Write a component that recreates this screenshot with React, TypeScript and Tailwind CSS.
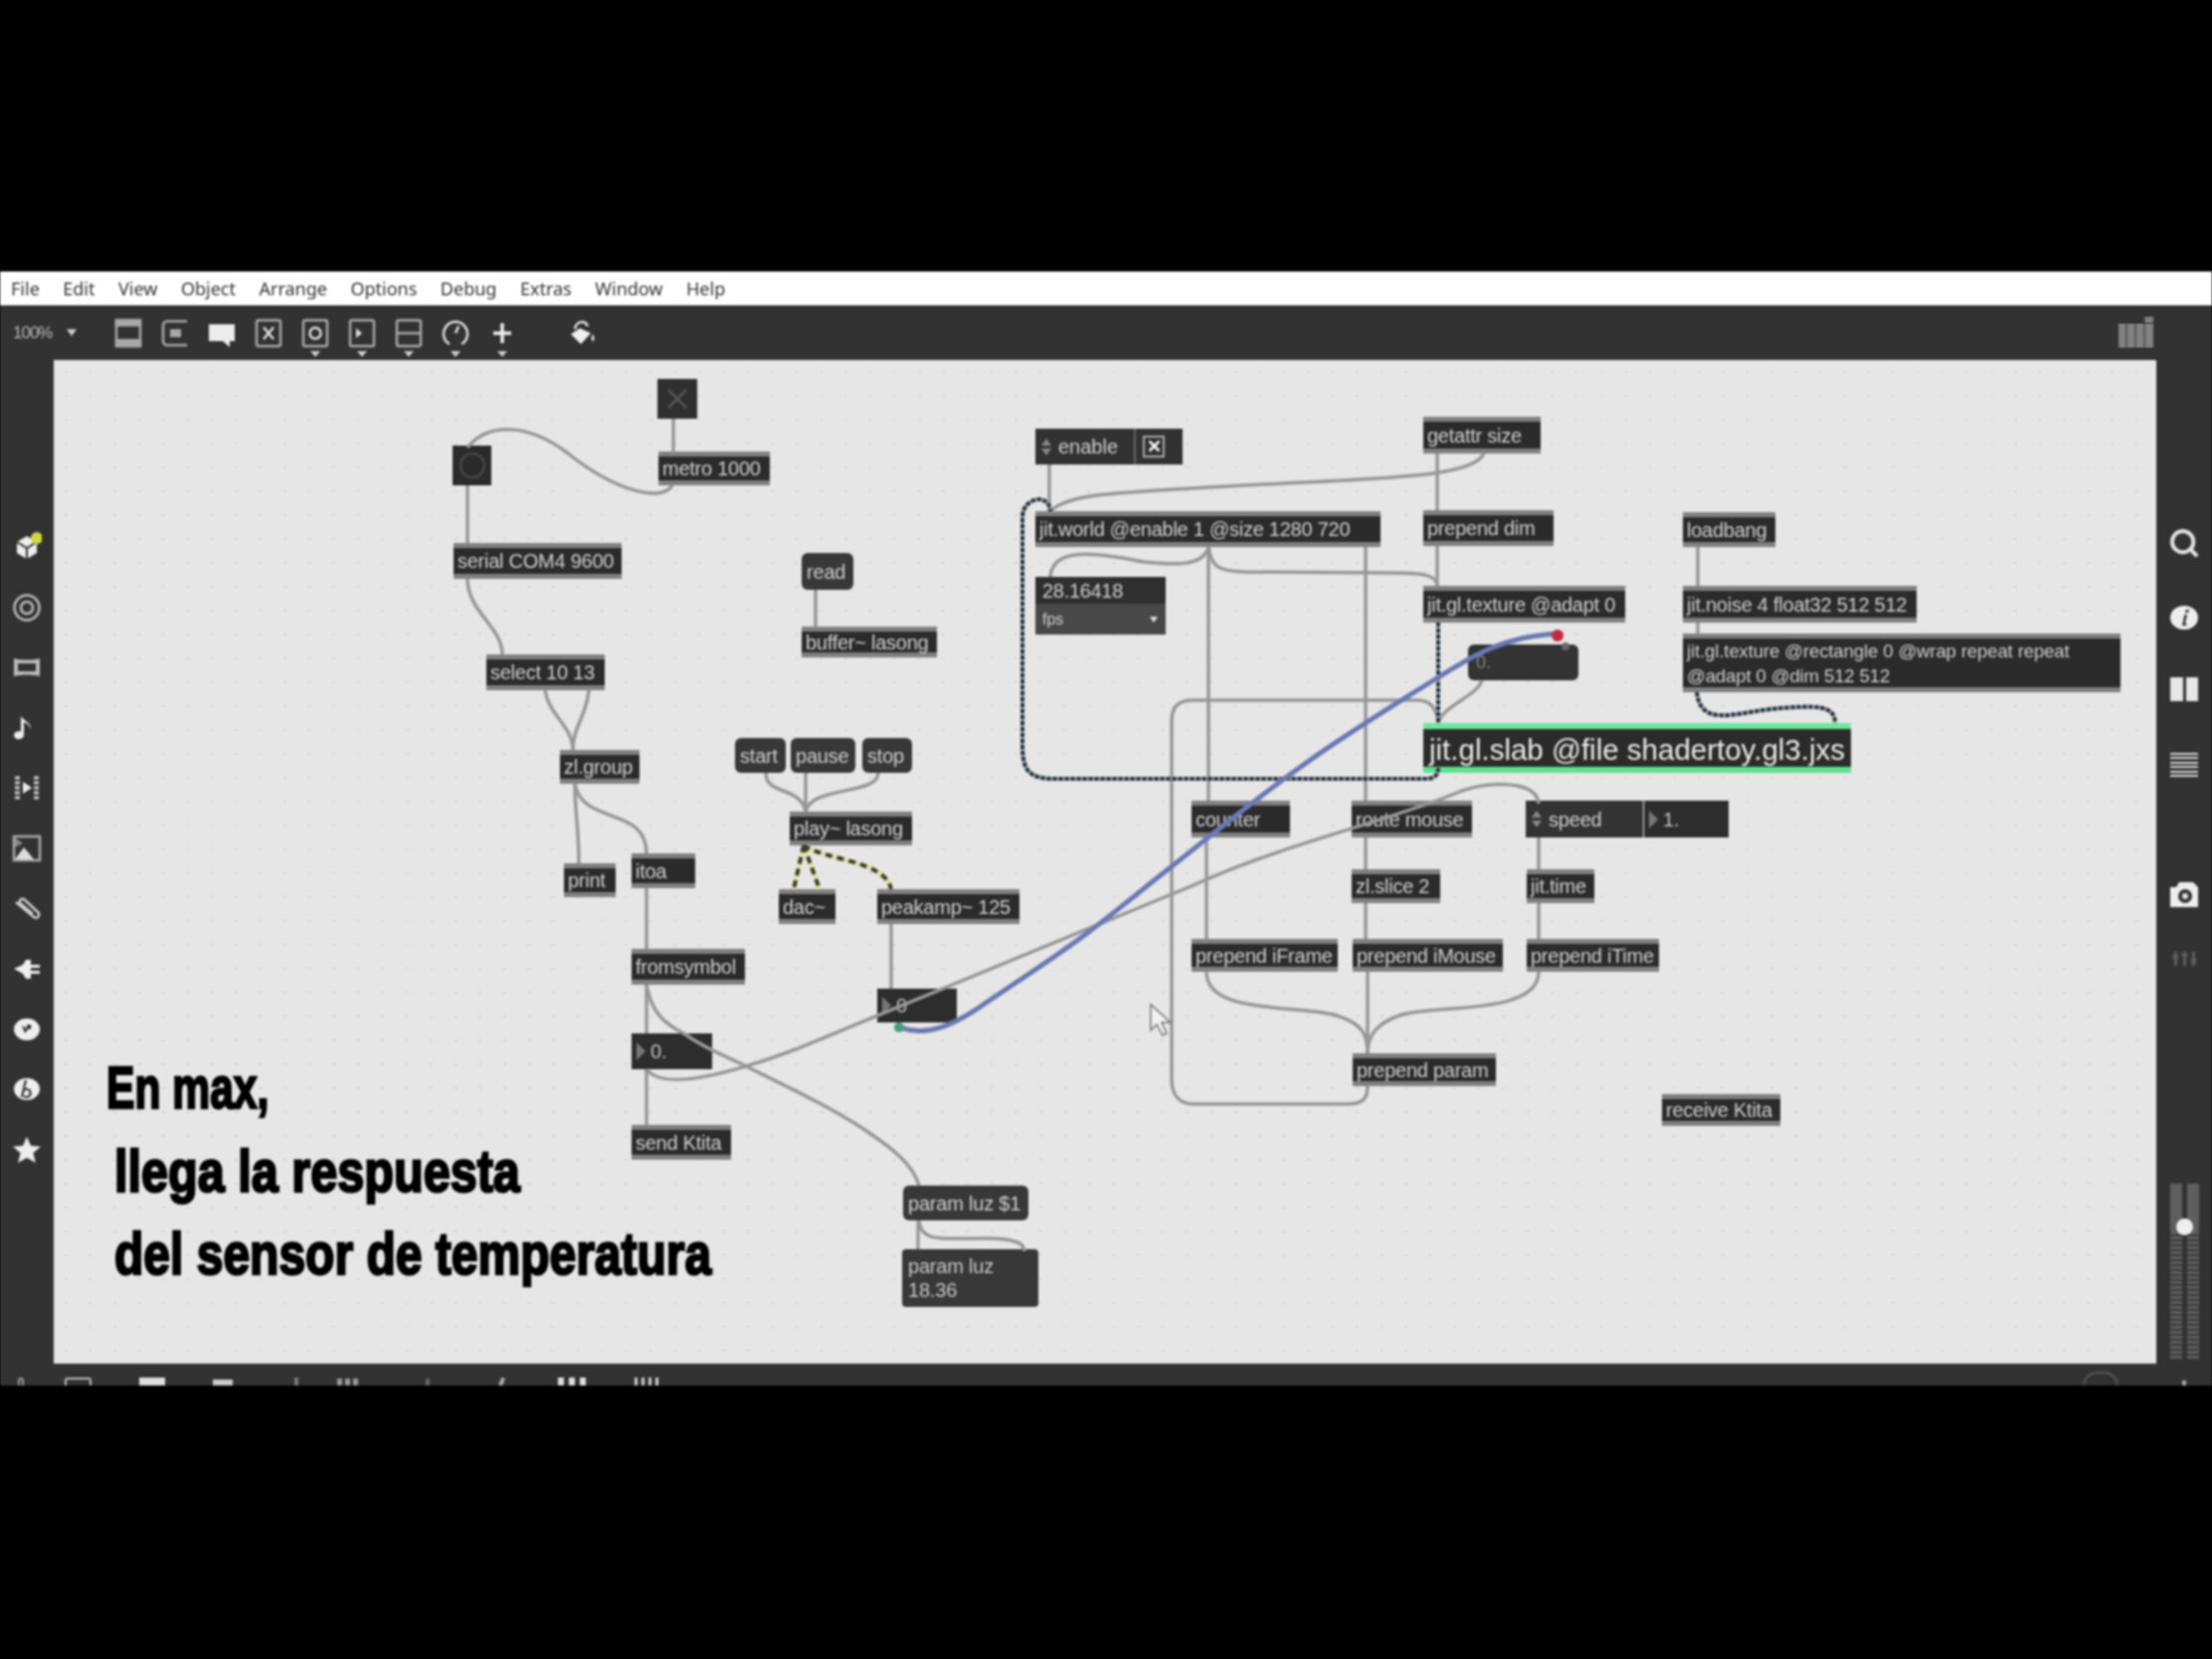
import { ReactNode } from "react";
import { Search } from "lucide-react";

// positions are in page pixels, the canvas starts at 54,362
const CX = 54;
const CY = 362;

type NodeData = {
  t: string;
  x: number;
  y: number;
  r: number;
  b: number;
  kind?: "obj" | "msg" | "num" | "attr";
};

const nodes: NodeData[] = [
  { t: "metro 1000", x: 662, y: 454, r: 774, b: 488 },
  { t: "serial COM4 9600", x: 456, y: 546, r: 625, b: 582 },
  { t: "select 10 13", x: 489, y: 658, r: 608, b: 694 },
  { t: "zl.group", x: 563, y: 754, r: 643, b: 788 },
  { t: "print", x: 567, y: 868, r: 619, b: 902 },
  { t: "itoa", x: 635, y: 858, r: 699, b: 893 },
  { t: "fromsymbol", x: 635, y: 954, r: 749, b: 990 },
  { t: "send Ktita", x: 635, y: 1131, r: 735, b: 1166 },
  { t: "buffer~ lasong", x: 806, y: 630, r: 942, b: 661 },
  { t: "play~ lasong", x: 794, y: 816, r: 917, b: 850 },
  { t: "dac~", x: 783, y: 894, r: 840, b: 929 },
  { t: "peakamp~ 125", x: 882, y: 894, r: 1025, b: 929 },
  { t: "getattr size", x: 1431, y: 419, r: 1549, b: 456 },
  { t: "jit.world @enable 1 @size 1280 720", x: 1041, y: 514, r: 1388, b: 550 },
  { t: "prepend dim", x: 1431, y: 513, r: 1562, b: 549 },
  { t: "loadbang", x: 1692, y: 515, r: 1785, b: 550 },
  { t: "jit.gl.texture @adapt 0", x: 1431, y: 589, r: 1634, b: 626 },
  { t: "jit.noise 4 float32 512 512", x: 1692, y: 589, r: 1927, b: 626 },
  { t: "counter", x: 1198, y: 805, r: 1297, b: 842 },
  { t: "route mouse", x: 1359, y: 805, r: 1480, b: 842 },
  { t: "zl.slice 2", x: 1359, y: 874, r: 1448, b: 908 },
  { t: "jit.time", x: 1535, y: 874, r: 1603, b: 908 },
  { t: "prepend iFrame", x: 1198, y: 944, r: 1345, b: 977 },
  { t: "prepend iMouse", x: 1360, y: 944, r: 1511, b: 977 },
  { t: "prepend iTime", x: 1535, y: 944, r: 1668, b: 977 },
  { t: "prepend param", x: 1360, y: 1059, r: 1504, b: 1092 },
  { t: "receive Ktita", x: 1671, y: 1100, r: 1790, b: 1132 },
  { t: "read", x: 806, y: 556, r: 858, b: 593, kind: "msg" },
  { t: "start", x: 739, y: 742, r: 790, b: 777, kind: "msg" },
  { t: "pause", x: 795, y: 742, r: 860, b: 777, kind: "msg" },
  { t: "stop", x: 867, y: 742, r: 917, b: 777, kind: "msg" },
  { t: "param luz $1", x: 908, y: 1192, r: 1034, b: 1227, kind: "msg" },
  { t: "0.", x: 635, y: 1039, r: 716, b: 1075, kind: "num" },
  { t: "0", x: 882, y: 994, r: 962, b: 1028, kind: "num" },
  { t: "1.", x: 1653, y: 805, r: 1738, b: 842, kind: "num" },
  { t: "speed", x: 1534, y: 805, r: 1652, b: 842, kind: "attr" },
];

const grayWires = [
  "M677 421L677 456",
  "M676 488C665 505 620 495 570 455C530 425 490 425 470 450",
  "M470 488L470 546",
  "M470 582C470 615 505 630 505 658",
  "M548 694C552 720 576 730 576 754",
  "M592 694C590 720 576 730 576 754",
  "M578 788C578 820 582 830 582 868",
  "M578 788C585 830 650 810 650 858",
  "M650 893L650 954",
  "M650 990L650 1039",
  "M650 990C655 1020 670 1030 689 1040C710 1055 730 1062 750 1072C790 1092 835 1113 868 1135C895 1153 918 1170 924 1192",
  "M650 1075L650 1131",
  "M650 1075C665 1095 720 1085 800 1055L1200 890C1300 845 1400 825 1470 795C1500 785 1545 785 1547 808",
  "M770 777C770 800 805 790 810 816",
  "M810 777L810 816",
  "M883 777C883 800 815 790 810 816",
  "M820 593L820 630",
  "M896 929L896 994",
  "M1055 467L1055 514",
  "M1492 456C1480 480 1400 480 1250 488C1130 495 1075 495 1056 514",
  "M1445 456L1445 513",
  "M1445 549L1445 589",
  "M1215 550C1210 570 1180 568 1150 565C1100 555 1058 550 1056 580",
  "M1215 550C1218 570 1225 574 1250 575L1400 576C1430 576 1445 578 1445 589",
  "M1215 550L1215 805",
  "M1213 842L1213 944",
  "M1373 550L1373 805",
  "M1373 842L1373 874",
  "M1373 908L1373 944",
  "M1490 684C1485 700 1450 710 1446 727",
  "M1375 1092C1375 1105 1370 1110 1355 1110L1200 1110C1185 1110 1178 1100 1178 1085L1178 725C1178 710 1185 704 1200 704L1425 704C1440 704 1445 715 1446 727",
  "M1707 550L1707 589",
  "M1707 626L1707 637",
  "M1547 842L1547 874",
  "M1547 908L1547 944",
  "M1213 977C1213 1020 1300 1010 1340 1020C1370 1028 1375 1040 1375 1059",
  "M1375 977L1375 1059",
  "M1547 977C1547 1020 1450 1010 1410 1020C1385 1028 1375 1040 1375 1059",
  "M923 1227L923 1256",
  "M924 1227C925 1250 950 1245 990 1245C1020 1245 1030 1250 1030 1258",
];

const dashWires = [
  "M1446 626L1446 727",
  "M1446 772C1446 782 1440 783 1430 783L1060 783C1035 783 1028 775 1028 750L1028 520C1028 500 1055 495 1056 514",
  "M1706 696C1710 730 1740 718 1780 713C1830 708 1845 710 1845 727",
];

const menu = ["File", "Edit", "View", "Object", "Arrange", "Options", "Debug", "Extras", "Window", "Help"];

function Obj({ n }: { n: NodeData }) {
  const kind = n.kind ?? "obj";
  const pos = { left: n.x - CX, top: n.y - CY, width: n.r - n.x, height: n.b - n.y };
  if (kind === "msg") {
    return (
      <div style={pos} className="absolute flex items-center whitespace-nowrap rounded-[6px] bg-[#383838] px-[5px] text-[20px] leading-none tracking-[-0.2px] text-[#d0d0d0]">
        {n.t}
      </div>
    );
  }
  if (kind === "num") {
    return (
      <div style={pos} className="absolute flex items-center gap-[5px] bg-[#2d2d2d] pl-[5px] text-[20px] leading-none text-[#c0c0c0]">
        <span className="h-0 w-0 border-y-[9px] border-l-[9px] border-y-transparent border-l-[#777]" />
        {n.t}
      </div>
    );
  }
  if (kind === "attr") {
    return (
      <div style={pos} className="absolute flex items-center gap-[7px] bg-[#333] pl-[6px] text-[20px] leading-none tracking-[-0.2px] text-[#d0d0d0]">
        <Updown />
        {n.t}
      </div>
    );
  }
  return (
    <div style={pos} className="absolute flex items-center whitespace-nowrap border-y-[5px] border-[#808080] bg-[#2b2b2b] px-[4px] text-[20px] leading-none tracking-[-0.25px] text-[#d0d0d0]">
      {n.t}
    </div>
  );
}

function Updown() {
  return (
    <span className="flex flex-col gap-[3px]">
      <span className="h-0 w-0 border-x-[5px] border-b-[7px] border-x-transparent border-b-[#888]" />
      <span className="h-0 w-0 border-x-[5px] border-t-[7px] border-x-transparent border-t-[#888]" />
    </span>
  );
}

function Tool({ children, caret }: { children: ReactNode; caret?: boolean }) {
  return (
    <div className="relative h-[30px] w-[28px]">
      <svg viewBox="0 0 28 30" className="h-[30px] w-[28px] text-[#a8a8a8]" fill="none" stroke="currentColor" strokeWidth="2.5">
        {children}
      </svg>
      {caret && (
        <span className="absolute left-[9px] top-[33px] h-0 w-0 border-x-[5px] border-t-[6px] border-x-transparent border-t-[#ccc]" />
      )}
    </div>
  );
}

function Toolbar() {
  return (
    <div className="flex h-[55px] items-center bg-[#323232]">
      <span className="ml-[13px] w-[44px] text-[17px] tracking-[-1px] text-[#b8b8b8]">100%</span>
      <span className="ml-[10px] h-0 w-0 border-x-[5px] border-t-[7px] border-x-transparent border-t-[#ccc]" />
      <div className="ml-[38px] flex items-center gap-[19px]">
        <Tool>
          <rect x="2" y="2" width="24" height="26" />
          <rect x="2" y="2" width="24" height="5" fill="currentColor" />
          <rect x="2" y="22" width="24" height="6" fill="currentColor" />
        </Tool>
        <Tool>
          <path d="M26 3H6a4 4 0 0 0-4 4v16a4 4 0 0 0 4 4h20" />
          <rect x="9" y="11" width="11" height="8" fill="currentColor" stroke="none" />
        </Tool>
        <Tool>
          <path d="M1 6h26v17h-5v6l-7-6H1z" fill="#ececec" stroke="none" />
        </Tool>
        <Tool>
          <rect x="2" y="2" width="24" height="26" rx="2" />
          <path d="M9 9l10 12M19 9L9 21" stroke="#ddd" />
        </Tool>
        <Tool caret>
          <rect x="2" y="2" width="24" height="26" rx="2" />
          <circle cx="14" cy="15" r="5.5" stroke="#ddd" />
        </Tool>
        <Tool caret>
          <rect x="2" y="2" width="24" height="26" rx="2" />
          <path d="M8 10l6 5-6 5z" fill="#ddd" stroke="none" />
        </Tool>
        <Tool caret>
          <rect x="2" y="2" width="24" height="26" rx="2" />
          <path d="M2 15h24" />
        </Tool>
        <Tool caret>
          <path d="M8 26a12 12 0 1 1 12 0" stroke="#ddd" />
          <path d="M14 15l3-7" stroke="#ddd" />
        </Tool>
        <Tool caret>
          <path d="M14 5v20M5 15h18" stroke="#eee" strokeWidth="3.500" />
        </Tool>
      </div>
      <div className="ml-[52px]">
        <Tool>
          <path d="M12 10L3 16l10 10 10-11z" fill="#f0f0f0" stroke="none" />
          <path d="M7 11C8 3 17 1 20 8" stroke="#e0e0e0" strokeWidth="2.500" />
          <path d="M25 16c2 3 2 6 0 7-2-1-2-4 0-7z" fill="#ddd" stroke="none" />
        </Tool>
      </div>
      <svg viewBox="0 0 35 33" className="ml-auto mr-[59px] h-[33px] w-[35px]">
        <path d="M0 9h35M0 12h35M0 15h35M0 18h35M0 21h35M0 24h35M0 27h35M0 30h35M26 2h9M26 5h9" stroke="#a8a8a8" strokeWidth="2" />
        <path d="M8 8v25M17 8v25M26 1v32" stroke="#323232" strokeWidth="1" />
      </svg>
    </div>
  );
}

const leftIcons: ReactNode[] = [
  <>
    <path d="M5 10l10-6 10 6v11l-10 6-10-6z" fill="#eee" />
    <path d="M5 10l10 6 10-6M15 16v11" stroke="#333" strokeWidth="2" fill="none" />
    <circle cx="25" cy="6" r="6" fill="#d3d83a" />
  </>,
  <>
    <circle cx="15" cy="15" r="12.5" fill="none" stroke="#bbb" strokeWidth="2.5" />
    <circle cx="15" cy="15" r="6" fill="none" stroke="#bbb" strokeWidth="2.5" />
  </>,
  <path d="M2 6c8 2 18 2 26 0v18c-8-2-18-2-26 0zM6 11v8h18v-8z" fill="#bbb" fillRule="evenodd" />,
  <path d="M12 5v17a5 4 0 1 1-3-3.500V3c3 5 10 6 10 13-2-5-5-6-7-7z" fill="#eee" />,
  <>
    <path d="M3 5h5M3 10h5M3 15h5M3 20h5M3 25h5M22 5h5M22 10h5M22 15h5M22 20h5M22 25h5" stroke="#ccc" strokeWidth="3" />
    <path d="M11 9l9 6-9 6z" fill="#eee" />
  </>,
  <>
    <rect x="2" y="3" width="26" height="24" fill="none" stroke="#aaa" strokeWidth="2.5" />
    <path d="M3 26l9-12 6 7 4 5z" fill="#ddd" />
    <path d="M3 4l8 6-8 4z" fill="#888" />
  </>,
  <path d="M4 8l18 15a3 3 0 0 0 4-5L12 5a3 3 0 0 0-4 4l13 11" fill="none" stroke="#ccc" strokeWidth="2.5" />,
  <path d="M2 15l9-4 3-5h5v5h9v3h-9v3h9v3h-9v5h-5l-3-5z" fill="#eee" />,
  <>
    <ellipse cx="15" cy="15" rx="13" ry="11" fill="#eee" />
    <path d="M10 11l3 8 3-4zM17 10a2.500 2.500 0 1 0 .1 0z" fill="#333" />
  </>,
  <>
    <ellipse cx="15" cy="15" rx="13" ry="11" fill="#eee" />
    <path d="M14 6l-4 17M12 16a4 4 0 1 1 0 6" fill="none" stroke="#333" strokeWidth="2.2" />
  </>,
  <path d="M15 2l4 9 10 .8-7.600 6.400 2.400 9.800L15 23l-8.800 5 2.400-9.800L1 11.800 11 11z" fill="#eee" />,
];

function LeftBar() {
  return (
    <div className="flex w-[54px] shrink-0 flex-col items-center gap-[30.600px] bg-[#323232] pt-[173px]">
      {leftIcons.map((icon, i) => (
        <svg key={i} viewBox="0 0 30 30" className="h-[30px] w-[30px]">
          {icon}
        </svg>
      ))}
    </div>
  );
}

function RightBar() {
  return (
    <div className="flex w-[56px] shrink-0 flex-col items-center bg-[#323232] pt-[168px] text-[#ddd]">
      <Search size={32} strokeWidth={3} className="text-[#e2e2e2]" />
      <svg viewBox="0 0 30 24" className="mt-[47px] h-[24px] w-[30px]">
        <ellipse cx="15" cy="12" rx="14" ry="12" fill="#eee" />
        <path d="M17 4h3l-1 3h-3zM15 9h3l-2 9 2 .5-1 1.500h-4l2-9z" fill="#333" />
      </svg>
      <div className="mt-[48px] flex h-[24px] w-[28px] gap-[3px]">
        <div className="flex-1 bg-[#e6e6e6]" />
        <div className="flex-1 bg-[#e6e6e6]" />
      </div>
      <div className="mt-[52px] flex h-[24px] w-[28px] flex-col justify-between">
        {[0, 1, 2, 3, 4, 5].map((i) => (
          <div key={i} className="h-[2px] bg-[#d8d8d8]" />
        ))}
      </div>
      <svg viewBox="0 0 30 26" className="mt-[105px] h-[26px] w-[30px]">
        <path d="M1 6h6l3-5h14l5 5v20H1z" fill="#eee" />
        <circle cx="16" cy="15" r="7" fill="#333" />
        <circle cx="16" cy="15" r="3" fill="#ddd" />
      </svg>
      <svg viewBox="0 0 24 14" className="mt-[45px] h-[14px] w-[26px]" fill="#5c5c5c">
        <rect x="2" y="0" width="3" height="14" />
        <rect x="11" y="0" width="3" height="14" />
        <rect x="20" y="0" width="3" height="14" />
        <circle cx="3.500" cy="5" r="3" />
        <circle cx="12.500" cy="3" r="3" />
        <circle cx="21.500" cy="9" r="3" />
      </svg>
      <div className="relative mt-[219px] flex h-[177px] w-[29px] justify-between">
        {[0, 1].map((i) => (
          <div key={i} className="flex w-[12px] flex-col">
            <div className="h-[48px] bg-[#5e5e5e]" />
            <div className="flex-1 bg-[repeating-linear-gradient(#5c5c5c_0,#5c5c5c_3px,#3c3c3c_3px,#3c3c3c_5px)]" />
          </div>
        ))}
        <div className="absolute left-[6px] top-[35px] h-[17px] w-[17px] rounded-full bg-[#eee]" />
      </div>
    </div>
  );
}

function Wires() {
  return (
    <svg viewBox="54 362 2114 1009" className="pointer-events-none absolute inset-0 h-full w-full" fill="none">
      {grayWires.map((d, i) => (
        <path key={i} d={d} stroke="#979797" strokeWidth="3.500" />
      ))}
      {dashWires.map((d, i) => (
        <g key={i}>
          <path d={d} stroke="#9aa4ad" strokeWidth="4" />
          <path d={d} stroke="#24303c" strokeWidth="4" strokeDasharray="4 2" />
        </g>
      ))}
      <path d="M808 850L798 894M808 850L824 894M808 850C830 865 890 865 896 894" stroke="#e0e2a8" strokeWidth="5" />
      <path d="M808 850L798 894M808 850L824 894M808 850C830 865 890 865 896 894" stroke="#3b3b2c" strokeWidth="4" strokeDasharray="7 5" />
      <path d="M905 1033C935 1044 965 1027 993 1007C1030 982 1060 963 1092 939C1120 918 1150 893 1177 872C1220 838 1260 805 1305 773C1350 740 1400 710 1446 681C1480 660 1510 640 1566 637" stroke="#6a79b4" strokeWidth="5" />
      <circle cx="904" cy="1033" r="5" fill="#4d9a7c" />
      <circle cx="1566" cy="639" r="6" fill="#c22a45" />
      <circle cx="1574" cy="650" r="4" fill="#666" />
      {/* mouse pointer */}
      <path d="M1157 1010L1157 1036L1163 1030L1169 1041L1173 1039L1168 1028L1177 1028Z" fill="#f2f2f2" stroke="#777" strokeWidth="1.500" />
    </svg>
  );
}

function Canvas() {
  return (
    <div className="relative flex-1 overflow-hidden bg-[#e6e6e6] bg-[radial-gradient(#d2d2d2_1px,transparent_1.500px)] bg-[size:24.500px_24px] font-['Liberation_Sans',Arial,sans-serif]">
      {/* toggle */}
      <div className="absolute left-[607px] top-[19px] flex h-[40px] w-[40px] items-center justify-center bg-[#2f2f2f]">
        <svg viewBox="0 0 24 24" className="h-[24px] w-[24px]" stroke="#555" strokeWidth="2.500">
          <path d="M3 3l18 18M21 3L3 21" />
        </svg>
      </div>
      {/* button */}
      <div className="absolute left-[401px] top-[86px] flex h-[40px] w-[39px] items-center justify-center bg-[#2b2b2b]">
        <div className="h-[26px] w-[26px] rounded-full border-[2px] border-[#4c4c4c]" />
      </div>
      {nodes.map((n) => (
        <Obj key={n.t + n.x} n={n} />
      ))}
      {/* enable attrui */}
      <div className="absolute left-[987px] top-[69px] flex h-[36px] w-[148px] items-center bg-[#323232] pl-[6px] text-[20px] leading-none text-[#d0d0d0]">
        <Updown />
        <span className="ml-[7px] w-[76px]">enable</span>
        <span className="flex h-full items-center border-l-[2px] border-[#666] pl-[7px]">
          <span className="flex h-[22px] w-[22px] items-center justify-center border-[2px] border-[#aaa] text-[18px] font-bold text-white">✕</span>
        </span>
      </div>
      {/* fpsgui */}
      <div className="absolute left-[987px] top-[218px] flex h-[58px] w-[131px] flex-col bg-[#2f2f2f] text-[#d0d0d0]">
        <div className="flex h-[27px] items-center pl-[7px] text-[20px] leading-none tracking-[-0.3px]">28.16418</div>
        <div className="flex flex-1 items-center justify-between bg-[#484848] pl-[7px] pr-[8px] text-[16px] leading-none">
          fps
          <span className="h-0 w-0 border-x-[4px] border-t-[6px] border-x-transparent border-t-[#ddd]" />
        </div>
      </div>
      {/* long texture box */}
      <div className="absolute left-[1638px] top-[275px] flex h-[59px] w-[440px] items-center border-y-[5px] border-[#808080] bg-[#2b2b2b] px-[4px] text-[18.500px] leading-[25px] tracking-[-0.1px] text-[#d0d0d0]">
        jit.gl.texture @rectangle 0 @wrap repeat repeat @adapt 0 @dim 512 512
      </div>
      {/* flonum in the middle */}
      <div className="absolute left-[1422px] top-[286px] flex h-[36px] w-[111px] items-center rounded-[6px] bg-[#333] pl-[8px] text-[18px] text-[#888]">0.</div>
      {/* slab */}
      <div className="absolute left-[1377px] top-[365px] flex h-[50px] w-[430px] items-center whitespace-nowrap border-y-[6px] border-t-[#6fe89c] border-b-[#5fe08d] bg-[#2b2b2b] px-[6px] pt-[3px] text-[29.500px] leading-none text-[#ececec]">
        jit.gl.slab @file shadertoy.gl3.jxs
      </div>
      {/* param luz comment */}
      <div className="absolute left-[853px] top-[894px] h-[58px] w-[137px] rounded-[4px] bg-[#383838] pl-[6px] pt-[5px] text-[20px] leading-[24px] tracking-[-0.2px] text-[#c8c8c8]">
        param luz
        <br />
        18.36
      </div>
      <Wires />
      <div className="absolute left-[53px] top-[690px] whitespace-nowrap text-[60px] font-bold leading-[83.500px] text-black [-webkit-text-stroke:2.5px_black]">
        <div className="origin-left scale-x-[0.71]">En max,</div>
        <div className="ml-[8px] origin-left scale-x-[0.81]">llega la respuesta</div>
        <div className="ml-[8px] origin-left scale-x-[0.8]">del sensor de temperatura</div>
      </div>
    </div>
  );
}

function BottomBar() {
  return (
    <div className="relative h-[22px] overflow-hidden bg-[#323232]">
      <div className="absolute left-[18px] top-[14px] h-[12px] w-[6px] rounded-t-full border-[2px] border-[#999]" />
      <div className="absolute left-[65px] top-[14px] h-[12px] w-[27px] rounded-[3px] border-[2px] border-[#bbb]" />
      <div className="absolute left-[140px] top-[14px] h-[12px] w-[26px] bg-[#ddd]" />
      <div className="absolute left-[214px] top-[16px] h-[12px] w-[20px] bg-[#ccc]" />
      <div className="absolute left-[296px] top-[14px] h-[12px] w-[4px] bg-[#777]" />
      <div className="absolute left-[339px] top-[15px] flex gap-[3px]">
        <div className="h-[12px] w-[5px] bg-[#999]" />
        <div className="h-[12px] w-[5px] bg-[#999]" />
        <div className="h-[12px] w-[5px] bg-[#999]" />
      </div>
      <div className="absolute left-[428px] top-[15px] h-[12px] w-[4px] bg-[#666]" />
      <div className="absolute left-[502px] top-[14px] h-[12px] w-[4px] rotate-[20deg] bg-[#aaa]" />
      <div className="absolute left-[561px] top-[14px] flex gap-[5px]">
        <div className="h-[12px] w-[6px] bg-[#ddd]" />
        <div className="h-[12px] w-[6px] bg-[#ddd]" />
        <div className="h-[12px] w-[6px] bg-[#ddd]" />
      </div>
      <div className="absolute left-[638px] top-[14px] flex gap-[4px]">
        <div className="h-[8px] w-[3px] bg-[#ccc]" />
        <div className="h-[8px] w-[3px] bg-[#ccc]" />
        <div className="h-[8px] w-[3px] bg-[#ccc]" />
        <div className="h-[8px] w-[3px] bg-[#ccc]" />
      </div>
      <div className="absolute left-[2094px] top-[8px] h-[30px] w-[36px] rounded-full border-[2px] border-[#555]" />
      <div className="absolute left-[2194px] top-[17px] h-[5px] w-[4px] bg-[#aaa]" />
    </div>
  );
}

export default function App() {
  return (
    <div className="h-[1668px] w-[2224px] overflow-hidden bg-black">
      <div className="flex h-full w-full flex-col blur-[0.8px]">
        <div className="h-[273px]" />
        <div className="flex h-[34px] items-center gap-[23.500px] bg-white pl-[11px] font-['Noto_Sans',sans-serif] text-[18px] leading-none text-[#333]">
          {menu.map((m) => (
            <span key={m}>{m}</span>
          ))}
        </div>
        <div className="font-['Liberation_Sans',Arial,sans-serif]">
          <Toolbar />
        </div>
        <div className="flex h-[1009px]">
          <LeftBar />
          <Canvas />
          <RightBar />
        </div>
        <BottomBar />
        <div className="flex-1" />
      </div>
    </div>
  );
}
